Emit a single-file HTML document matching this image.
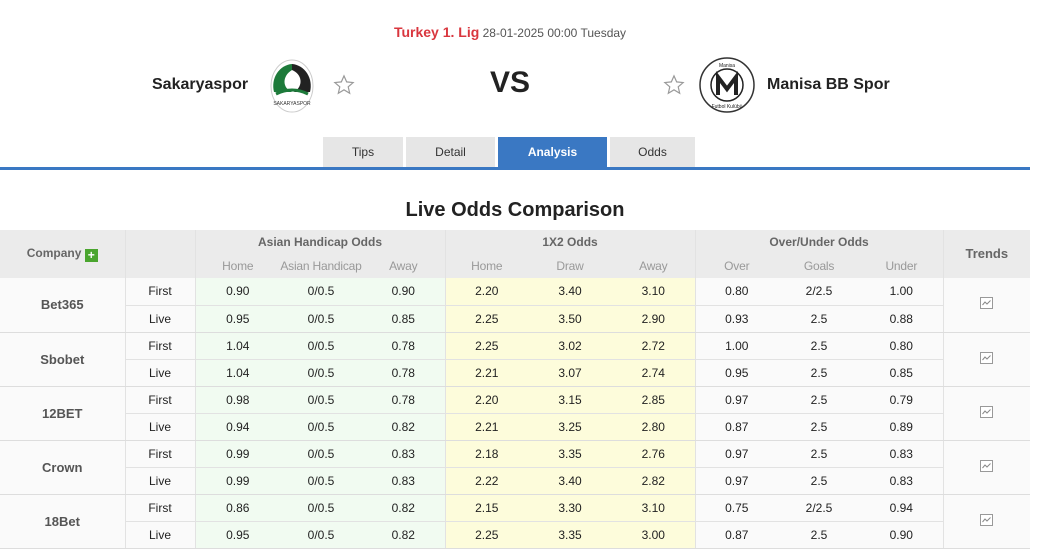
<!DOCTYPE html>
<html><head><meta charset="utf-8"><style>
*{margin:0;padding:0;box-sizing:border-box}
body{width:1037px;height:553px;background:#fff;font-family:"Liberation Sans",Arial,sans-serif;position:relative;overflow:hidden;color:#222}
.abs{position:absolute}
.tab{position:absolute;top:137px;height:30px;background:#e6e6e6;font-size:12px;color:#333;text-align:center;line-height:30px}
table{position:absolute;left:0;top:230px;width:1030px;border-collapse:collapse;table-layout:fixed;font-size:12px}
td{text-align:center;height:27px;border-bottom:1px solid #e2e2e2;color:#222;white-space:nowrap}
th{background:#ebebeb;font-weight:bold;color:#666;font-size:12px;white-space:nowrap;overflow:hidden}
.sub th{font-weight:normal;color:#999;height:24px;vertical-align:middle;letter-spacing:-0.2px}
.g{background:#f1fbf1}.y{background:#fdfcdb}.w{background:#fafafa}
.bl{border-left:1px solid #e2e2e2}
.co{font-weight:bold;color:#555;font-size:13px;background:#fafafa;border-bottom:1px solid #ddd}
.tr{background:#fafafa;border-left:1px solid #e2e2e2;border-bottom:1px solid #ddd}
.last td{border-bottom:1px solid #ddd}
</style></head><body>
<div class="abs" style="left:0;width:1020px;top:24px;text-align:center;font-size:12px;color:#555"><span style="color:#d9363e;font-weight:bold;font-size:14px">Turkey 1. Lig</span> 28-01-2025 00:00 Tuesday</div>
<div class="abs" style="left:152px;top:76px;font-size:16px;font-weight:bold;color:#222">Sakaryaspor</div>
<svg class="abs" style="left:264px;top:58px" width="56" height="56" viewBox="0 0 56 56"><ellipse cx="28" cy="28" rx="21" ry="26" fill="#fff" stroke="#ccc"/><path d="M28 6 A20 22 0 0 0 10 34 L28 34 C18 30 18 18 28 12 Z" fill="#1d7a3a"/><path d="M28 6 A20 22 0 0 1 46 34 L30 34 C40 28 38 16 28 12 Z" fill="#222"/><path d="M12 36 Q28 28 44 36" stroke="#1d7a3a" stroke-width="3" fill="none"/><text x="28" y="47" font-size="5" text-anchor="middle" fill="#333">SAKARYASPOR</text></svg>
<svg class="abs" style="left:333px;top:74px" width="22" height="22" viewBox="0 0 24 24"><path d="M12 2 L14.9 8.6 L22 9.3 L16.6 14 L18.2 21 L12 17.3 L5.8 21 L7.4 14 L2 9.3 L9.1 8.6 Z" fill="none" stroke="#999" stroke-width="1.3"/></svg>
<div class="abs" style="left:460px;width:100px;top:66px;text-align:center;font-size:30px;font-weight:bold;color:#222">VS</div>
<svg class="abs" style="left:663px;top:74px" width="22" height="22" viewBox="0 0 24 24"><path d="M12 2 L14.9 8.6 L22 9.3 L16.6 14 L18.2 21 L12 17.3 L5.8 21 L7.4 14 L2 9.3 L9.1 8.6 Z" fill="none" stroke="#999" stroke-width="1.3"/></svg>
<svg class="abs" style="left:698px;top:57px" width="58" height="56" viewBox="0 0 58 56"><ellipse cx="29" cy="28" rx="27" ry="27" fill="#fff" stroke="#333" stroke-width="1.5"/><circle cx="29" cy="28" r="16" fill="none" stroke="#222" stroke-width="1.5"/><path d="M20 38 L20 20 L29 32 L38 20 L38 38" fill="none" stroke="#222" stroke-width="4"/><text x="29" y="10" font-size="5" text-anchor="middle" fill="#222">Manisa</text><text x="29" y="51" font-size="5" text-anchor="middle" fill="#222">Futbol Kulübü</text></svg>
<div class="abs" style="left:767px;top:76px;font-size:16px;font-weight:bold;color:#222">Manisa BB Spor</div>
<div class="tab" style="left:323px;width:80px">Tips</div>
<div class="tab" style="left:406px;width:89px">Detail</div>
<div class="tab" style="left:498px;width:109px;background:#3a78c3;color:#fff;font-weight:bold">Analysis</div>
<div class="tab" style="left:610px;width:85px">Odds</div>
<div class="abs" style="left:0;top:167px;width:1030px;height:3px;background:#3a78c3"></div>
<div class="abs" style="left:0;width:1030px;top:199px;text-align:center;font-size:20px;font-weight:bold;color:#222">Live Odds Comparison</div>
<table>
<colgroup><col style="width:125px"><col style="width:70px"><col style="width:85px"><col style="width:82px"><col style="width:83px"><col style="width:83px"><col style="width:84px"><col style="width:83px"><col style="width:83px"><col style="width:82px"><col style="width:83px"><col style="width:87px"></colgroup>
<tr style="height:24px"><th rowspan="2" style="border-bottom:1px solid #ddd">Company <span style="display:inline-block;width:13px;height:13px;background:#4aa52e;color:#fff;font-size:12px;line-height:13px;vertical-align:-2px">+</span></th><th rowspan="2" class="bl" style="border-bottom:1px solid #ddd"></th><th colspan="3" class="bl">Asian Handicap Odds</th><th colspan="3" class="bl">1X2 Odds</th><th colspan="3" class="bl">Over/Under Odds</th><th rowspan="2" class="bl" style="border-bottom:1px solid #ddd;font-size:13px">Trends</th></tr>
<tr class="sub"><th class="bl" style="border-bottom:1px solid #ddd">Home</th><th style="border-bottom:1px solid #ddd">Asian Handicap</th><th style="border-bottom:1px solid #ddd">Away</th><th class="bl" style="border-bottom:1px solid #ddd">Home</th><th style="border-bottom:1px solid #ddd">Draw</th><th style="border-bottom:1px solid #ddd">Away</th><th class="bl" style="border-bottom:1px solid #ddd">Over</th><th style="border-bottom:1px solid #ddd">Goals</th><th style="border-bottom:1px solid #ddd">Under</th></tr>
</table>
<table style="top:278px">
<colgroup><col style="width:125px"><col style="width:70px"><col style="width:85px"><col style="width:82px"><col style="width:83px"><col style="width:83px"><col style="width:84px"><col style="width:83px"><col style="width:83px"><col style="width:82px"><col style="width:83px"><col style="width:87px"></colgroup>
<tbody id="b">
<tr><td rowspan="2" class="co">Bet365</td><td class="w bl">First</td><td class="g bl">0.90</td><td class="g">0/0.5</td><td class="g">0.90</td><td class="y bl">2.20</td><td class="y">3.40</td><td class="y">3.10</td><td class="w bl">0.80</td><td class="w">2/2.5</td><td class="w">1.00</td><td rowspan="2" class="tr">ICON</td></tr>
<tr class="last"><td class="w bl">Live</td><td class="g bl">0.95</td><td class="g">0/0.5</td><td class="g">0.85</td><td class="y bl">2.25</td><td class="y">3.50</td><td class="y">2.90</td><td class="w bl">0.93</td><td class="w">2.5</td><td class="w">0.88</td></tr>
<tr><td rowspan="2" class="co">Sbobet</td><td class="w bl">First</td><td class="g bl">1.04</td><td class="g">0/0.5</td><td class="g">0.78</td><td class="y bl">2.25</td><td class="y">3.02</td><td class="y">2.72</td><td class="w bl">1.00</td><td class="w">2.5</td><td class="w">0.80</td><td rowspan="2" class="tr">ICON</td></tr>
<tr class="last"><td class="w bl">Live</td><td class="g bl">1.04</td><td class="g">0/0.5</td><td class="g">0.78</td><td class="y bl">2.21</td><td class="y">3.07</td><td class="y">2.74</td><td class="w bl">0.95</td><td class="w">2.5</td><td class="w">0.85</td></tr>
<tr><td rowspan="2" class="co">12BET</td><td class="w bl">First</td><td class="g bl">0.98</td><td class="g">0/0.5</td><td class="g">0.78</td><td class="y bl">2.20</td><td class="y">3.15</td><td class="y">2.85</td><td class="w bl">0.97</td><td class="w">2.5</td><td class="w">0.79</td><td rowspan="2" class="tr">ICON</td></tr>
<tr class="last"><td class="w bl">Live</td><td class="g bl">0.94</td><td class="g">0/0.5</td><td class="g">0.82</td><td class="y bl">2.21</td><td class="y">3.25</td><td class="y">2.80</td><td class="w bl">0.87</td><td class="w">2.5</td><td class="w">0.89</td></tr>
<tr><td rowspan="2" class="co">Crown</td><td class="w bl">First</td><td class="g bl">0.99</td><td class="g">0/0.5</td><td class="g">0.83</td><td class="y bl">2.18</td><td class="y">3.35</td><td class="y">2.76</td><td class="w bl">0.97</td><td class="w">2.5</td><td class="w">0.83</td><td rowspan="2" class="tr">ICON</td></tr>
<tr class="last"><td class="w bl">Live</td><td class="g bl">0.99</td><td class="g">0/0.5</td><td class="g">0.83</td><td class="y bl">2.22</td><td class="y">3.40</td><td class="y">2.82</td><td class="w bl">0.97</td><td class="w">2.5</td><td class="w">0.83</td></tr>
<tr><td rowspan="2" class="co">18Bet</td><td class="w bl">First</td><td class="g bl">0.86</td><td class="g">0/0.5</td><td class="g">0.82</td><td class="y bl">2.15</td><td class="y">3.30</td><td class="y">3.10</td><td class="w bl">0.75</td><td class="w">2/2.5</td><td class="w">0.94</td><td rowspan="2" class="tr">ICON</td></tr>
<tr class="last"><td class="w bl">Live</td><td class="g bl">0.95</td><td class="g">0/0.5</td><td class="g">0.82</td><td class="y bl">2.25</td><td class="y">3.35</td><td class="y">3.00</td><td class="w bl">0.87</td><td class="w">2.5</td><td class="w">0.90</td></tr>
</tbody></table>
<script>
document.querySelectorAll('td.tr').forEach(function(t){t.innerHTML='<svg width="13" height="12" viewBox="0 0 13 12"><rect x="0.5" y="0.5" width="12" height="11" fill="#fff" stroke="#999"/><path d="M2.5 8 L5 5 L7 7 L10.5 3.5" fill="none" stroke="#888" stroke-width="1"/></svg>';});
</script>
</body></html>
